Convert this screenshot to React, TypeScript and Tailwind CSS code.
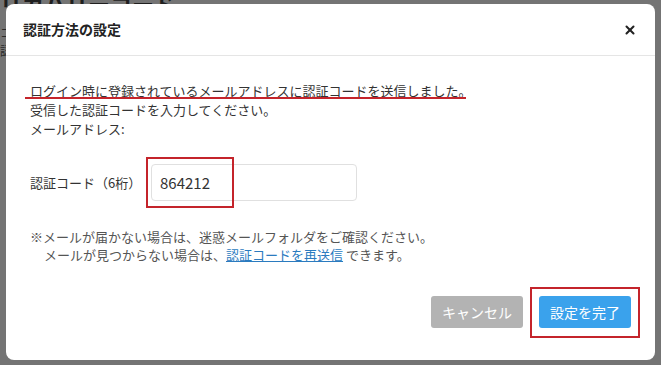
import { X } from "lucide-react";

const font = { fontFamily: '"Noto Sans CJK JP", "Noto Sans", sans-serif' };

export default function App() {
  return (
    <div
      className="relative h-[365px] w-[661px] overflow-hidden bg-[#747474] text-[#333]"
      style={font}
    >
      {/* page behind the overlay */}
      <div className="absolute left-0 top-[-13px] text-[22px] font-bold text-[#1f1f1f]">
        リカバリーコード
      </div>
      <div className="absolute left-0 top-[24px] text-[12px] leading-[18px] text-[#2a2a2a]">
        <p>コ</p>
        <p>認</p>
      </div>

      {/* modal */}
      <div className="absolute left-[6px] top-[4px] flex h-[356px] w-[649px] flex-col rounded-[8px] bg-white">
        <div className="flex h-[52px] items-center justify-between border-b border-[#e5e5e5] pl-[17px] pr-[18px]">
          <h2 className="text-[14px] font-bold text-[#222]">認証方法の設定</h2>
          <X className="h-[14px] w-[14px] text-[#222]" strokeWidth={3.5} />
        </div>

        <div className="flex flex-1 flex-col px-[24px] pt-[25px] text-[13px] leading-[19px]">
          <div className="relative">
            <p>ログイン時に登録されているメールアドレスに認証コードを送信しました。</p>
            <div className="absolute left-[-5px] top-[16px] h-[2px] w-[441px] bg-[#c4242b]" />
            <p>受信した認証コードを入力してください。</p>
            <p>メールアドレス:</p>
          </div>

          <div className="mt-[26px] flex items-center">
            <span className="w-[121px]">認証コード（6桁）</span>
            <div className="relative">
              <div className="flex h-[37px] w-[206px] items-center rounded-[4px] border border-[#e0e0e0] pl-[8px] text-[15px] text-[#333]">
                864212
              </div>
              <div className="absolute left-[-5px] top-[-7px] h-[51px] w-[88px] border-2 border-[#c4242b]" />
            </div>
          </div>

          <div className="mt-[27px] text-[13px] leading-[18px] text-[#555]">
            <p>※メールが届かない場合は、迷惑メールフォルダをご確認ください。</p>
            <p className="pl-[14px]">
              メールが見つからない場合は、
              <span className="text-[#2b7bbf] underline">認証コードを再送信</span> できます。
            </p>
          </div>

          <div className="mt-auto mb-[32px] flex justify-end gap-[16px]">
            <button className="h-[32px] w-[92px] rounded-[3px] bg-[#b3b3b3] text-[14px] text-white">
              キャンセル
            </button>
            <div className="relative">
              <button className="h-[32px] w-[92px] rounded-[3px] bg-[#3aa2ec] text-[14px] text-white">
                設定を完了
              </button>
              <div className="absolute left-[-9px] top-[-9px] h-[51px] w-[110px] border-2 border-[#c4242b]" />
            </div>
          </div>
        </div>
      </div>
    </div>
  );
}
